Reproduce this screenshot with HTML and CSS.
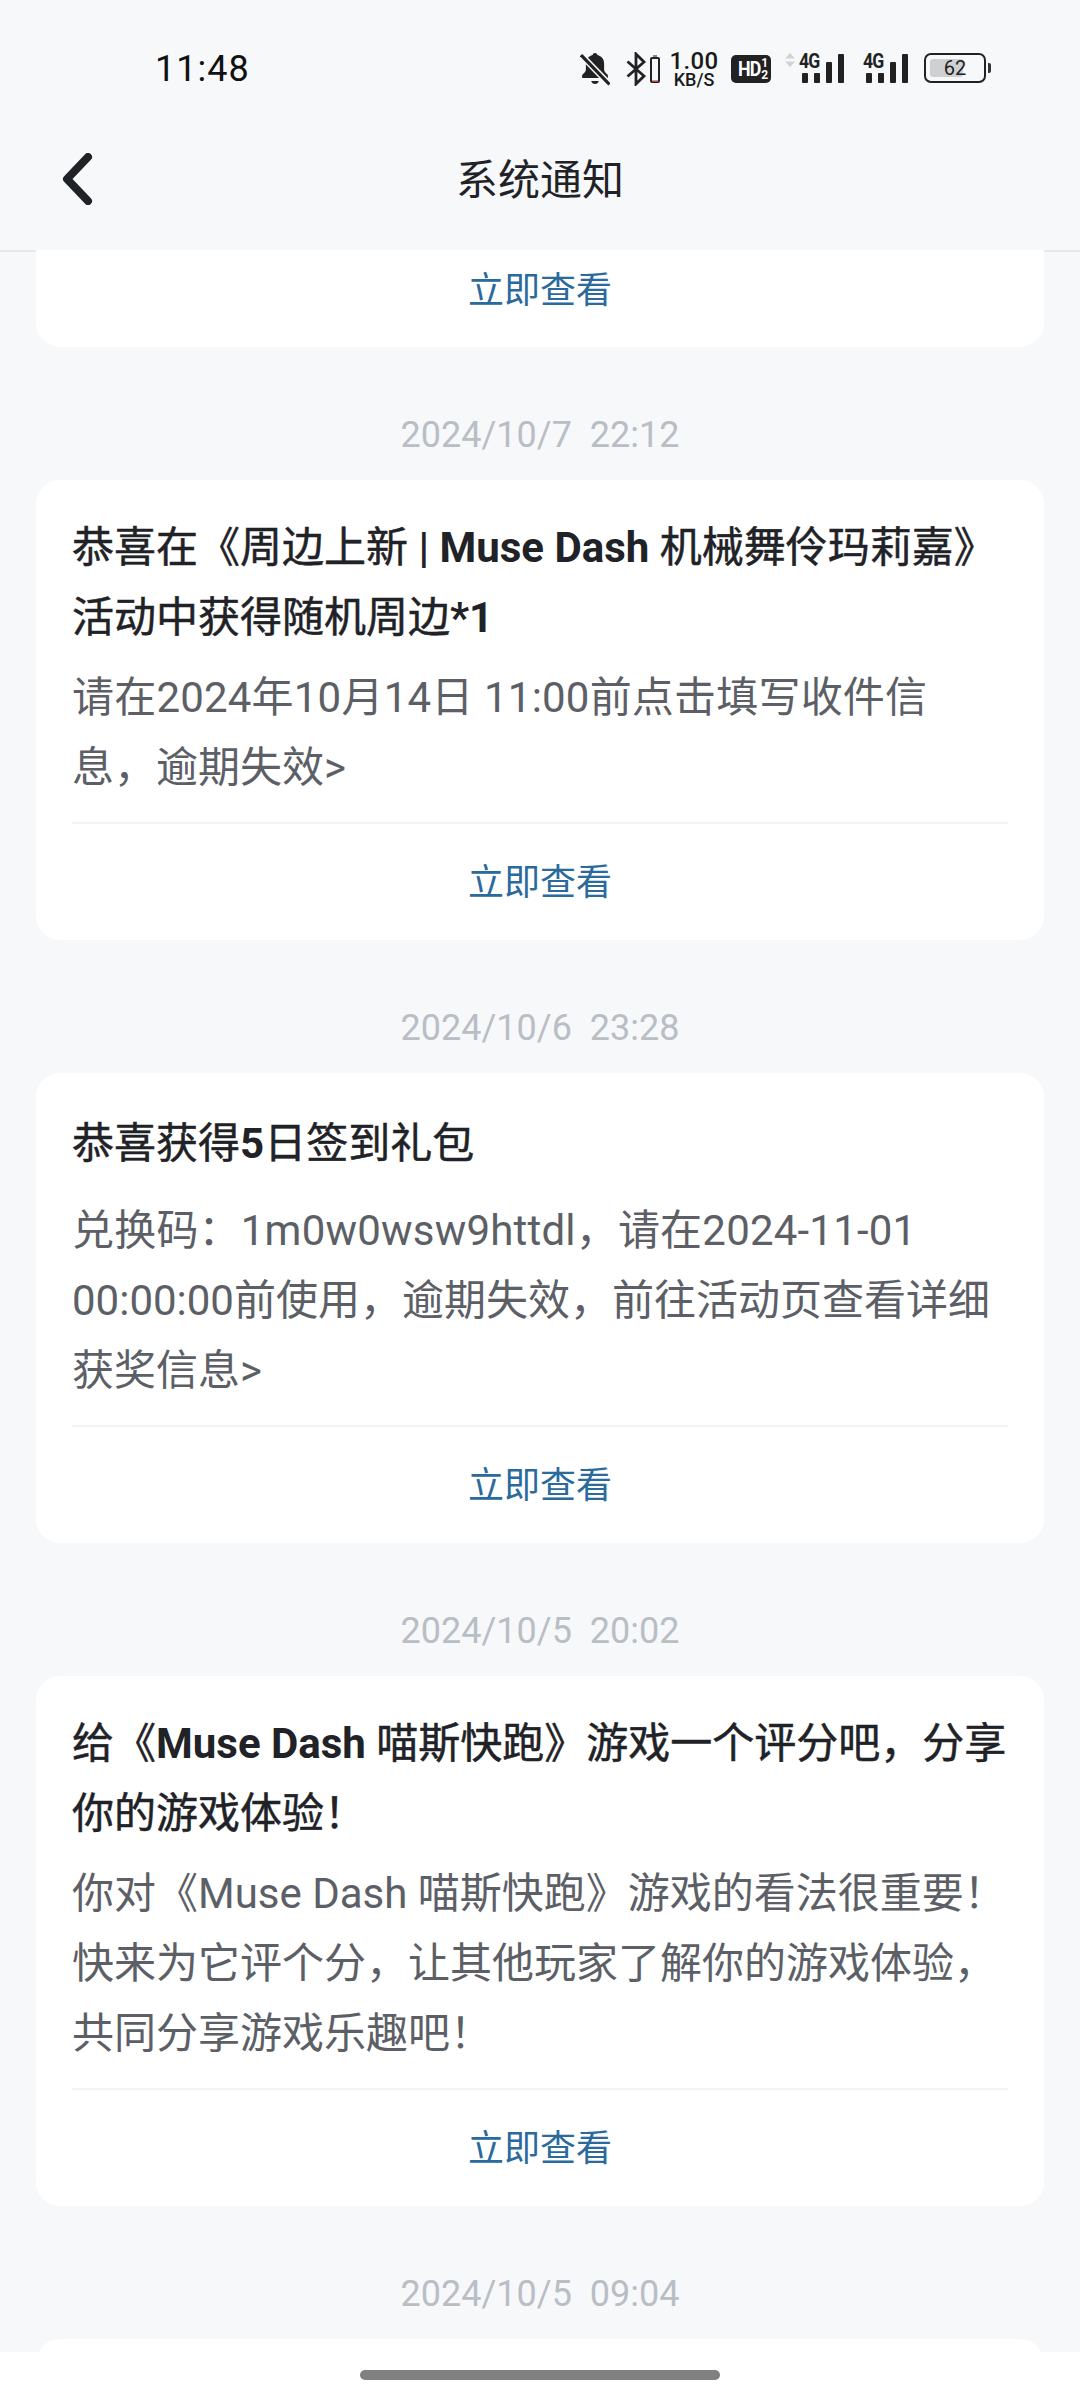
FILE: index.html
```html
<!DOCTYPE html>
<html lang="zh-CN">
<head>
<meta charset="utf-8">
<title>系统通知</title>
<link rel="stylesheet" href="styles.css">
</head>
<body>
<div class="screen">
  <header class="top">
    <div class="status">
      <span class="clock">11:48</span>
      <div class="status-icons">
        <svg class="ic-bell" width="30" height="34" viewBox="0 0 28 34" preserveAspectRatio="none"><path d="M14 1c1.300 0 2 .8 2.200 2 4 1 6.300 4.200 6.300 8.500v6c0 2 1.500 3.500 3.500 5.500v3H2v-3c2-2 3.500-3.500 3.500-5.500v-6C5.500 7.200 8 4 11.800 3 12 1.800 12.700 1 14 1z" fill="#222"/><path d="M10.500 29h7c-.4 2-1.800 3-3.500 3s-3.100-1-3.500-3z" fill="#222"/><path d="M1.500 3.500 28 33" stroke="#f7f8fa" stroke-width="6"/><path d="M1 3l26.500 29.500" stroke="#222" stroke-width="3"/></svg>
        <svg class="ic-bt" width="34" height="34" viewBox="0 0 34 34"><path d="M1.500 9.500 18 24l-8 8V2l8 8L1.500 24.500" fill="none" stroke="#222" stroke-width="2.800"/><rect x="25" y="6" width="8" height="24" rx="1" fill="none" stroke="#222" stroke-width="2"/><rect x="27" y="3" width="4" height="2" fill="#888"/><rect x="26" y="28" width="6" height="1.500" fill="#e88"/></svg>
        <div class="speed"><span class="speed-num">1.00</span><span class="speed-unit">KB/S</span></div>
        <div class="hd"><span class="hd-main">HD</span><span class="hd-sub"><span>1</span><span>2</span></span></div>
        <div class="net net-first">
          <svg class="arrows" width="10" height="14" viewBox="0 0 10 14"><path d="M5 0l5 5.500H0zM5 14 0 8.500h10z" fill="#d2d3d5"/></svg>
          <span class="g4">4G</span>
          <div class="bars"><i class="b1"></i><i class="b2"></i><i class="b3"></i><i class="b4"></i></div>
        </div>
        <div class="net">
          <span class="g4">4G</span>
          <div class="bars"><i class="b1"></i><i class="b2"></i><i class="b3"></i><i class="b4"></i></div>
        </div>
        <div class="battery"><div class="batt-body"><div class="batt-fill"></div><span class="batt-num">62</span></div><div class="batt-cap"></div></div>
      </div>
    </div>
    <div class="nav">
      <svg class="back" width="34" height="52" viewBox="0 0 34 52"><path d="M28 4 7 26l21 22" fill="none" stroke="#1f2226" stroke-width="8" stroke-linecap="round" stroke-linejoin="round"/></svg>
      <h1 class="nav-title">系统通知</h1>
    </div>
  </header>

  <main class="list">
    <article class="card card-cut">
      <a class="more">立即查看</a>
    </article>

    <time class="stamp">2024/10/7&nbsp; 22:12</time>
    <article class="card">
      <div class="content">
        <h2 class="title"><span class="ln">恭喜在《周边上新 <b>| Muse Dash</b> 机械舞伶玛莉嘉》</span><span class="ln">活动中获得随机周边<b>*1</b></span></h2>
        <p class="desc"><span class="ln wide">请在2024年10月14日 11:00前点击填写收件信</span><span class="ln">息，逾期失效&gt;</span></p>
      </div>
      <a class="more">立即查看</a>
    </article>

    <time class="stamp">2024/10/6&nbsp; 23:28</time>
    <article class="card">
      <div class="content">
        <h2 class="title title-single">恭喜获得<b>5</b>日签到礼包</h2>
        <p class="desc"><span class="ln wide">兑换码：1m0w0wsw9httdl，请在2024-11-01</span><span class="ln">00:00:00前使用，逾期失效，前往活动页查看详细</span><span class="ln">获奖信息&gt;</span></p>
      </div>
      <a class="more">立即查看</a>
    </article>

    <time class="stamp">2024/10/5&nbsp; 20:02</time>
    <article class="card">
      <div class="content">
        <h2 class="title"><span class="ln">给《<b>Muse Dash</b> 喵斯快跑》游戏一个评分吧，分享</span><span class="ln">你的游戏体验！</span></h2>
        <p class="desc">你对《Muse Dash 喵斯快跑》游戏的看法很重要！快来为它评个分，让其他玩家了解你的游戏体验，共同分享游戏乐趣吧！</p>
      </div>
      <a class="more">立即查看</a>
    </article>

    <time class="stamp">2024/10/5&nbsp; 09:04</time>
    <article class="card card-next"></article>
  </main>

  <footer class="gesture"><div class="gesture-bar"></div></footer>
</div>
</body>
</html>
```
FILE: styles.css
```css
* { box-sizing: border-box; }
html, body { margin: 0; padding: 0; }
body {
  width: 1080px;
  height: 2400px;
  overflow: hidden;
  background: #f7f8fa;
  font-family: Roboto, "Noto Sans CJK SC", sans-serif;
}
.screen { width: 1080px; height: 2400px; display: flex; flex-direction: column; overflow: hidden; }

.top { height: 252px; flex: none; background: #f7f8fa; border-bottom: 2px solid #e8e9ec; }
.status { height: 90px; padding: 45px 89px 0 155px; display: flex; justify-content: space-between; align-items: flex-start; }
.clock { font-size: 36px; line-height: 48px; color: #111; letter-spacing: 1px; }
.status-icons { display: flex; align-items: center; height: 48px; color: #222; }
.ic-bell { margin-right: 16px; }
.ic-bt { margin-right: 11px; }
.speed { display: flex; flex-direction: column; align-items: center; width: 46px; margin-right: 14px; color: #1a1a1a; }
.speed-num { font-size: 24px; line-height: 22px; font-weight: 500; letter-spacing: .4px; }
.speed-unit { font-size: 18px; line-height: 16px; font-weight: 500; }
.hd { width: 40px; height: 28px; background: #222; border-radius: 5px; color: #fff; display: flex; align-items: center; justify-content: center; margin-right: 28px; gap: 1px; }
.hd-main { font-size: 21px; font-weight: 700; line-height: 1; letter-spacing: -1px; transform: scaleX(.85); transform-origin: right center; }
.hd-sub { display: flex; flex-direction: column; font-size: 12px; font-weight: 700; line-height: 12px; }
.net { position: relative; display: flex; align-items: flex-end; width: 45px; height: 32px; padding: 0 0 2px 3px; margin-right: 16px; }
.net-first { margin-right: 19px; }
.arrows { position: absolute; left: -14px; top: 0; }
.g4 { position: absolute; left: 0; top: -1px; font-size: 20px; line-height: 18px; font-weight: 700; color: #222; letter-spacing: -1px; transform: scaleX(.88); transform-origin: left top; }
.bars { display: flex; align-items: flex-end; gap: 6px; height: 30px; }
.bars i { display: block; width: 6px; background: #222; border-radius: 1px; }
.bars .b1 { height: 10px; }
.bars .b2 { height: 10px; }
.bars .b3 { height: 21px; }
.bars .b4 { height: 29px; }
.battery { display: flex; align-items: center; margin-bottom: 2px; }
.batt-body { position: relative; width: 62px; height: 30px; border: 2px solid #222; border-radius: 7px; padding: 3px; text-align: center; }
.batt-fill { position: absolute; left: 4px; top: 4px; bottom: 4px; width: 33px; background: #cfd0d2; border-radius: 3px; }
.batt-num { position: relative; display: block; font-size: 20px; line-height: 20px; color: #222; }
.batt-cap { width: 3px; height: 10px; background: #333; margin-left: 2px; border-radius: 0 2px 2px 0; }

.nav { position: relative; height: 160px; display: flex; align-items: center; justify-content: center; padding-top: 21px; }
.back { position: absolute; left: 60px; top: 63px; }
.nav-title { margin: 0; font-size: 42px; font-weight: 400; line-height: 56px; color: #1f2226; }

.list { flex: 1; min-height: 0; overflow: hidden; margin-top: -2px; padding: 0 36px; position: relative; }
.card { background: #fff; border-radius: 24px; padding: 0 36px; }
.card-cut { height: 97px; border-radius: 0 0 24px 24px; }
.card-cut .more { height: 97px; padding-bottom: 24px; }
.content { padding: 33px 0 19px; border-bottom: 2px solid #f3f4f6; }
.title { margin: 0; font-size: 42px; line-height: 70px; font-weight: 400; -webkit-text-stroke: .5px #1f2226; color: #1f2226; }
.title b { font-weight: 700; -webkit-text-stroke: 0; }
.ln { display: block; }
.wide { letter-spacing: .2px; }
.title-single { padding: 3px 0 7px; }
.desc { margin: 10px 0 0; font-size: 42px; line-height: 70px; font-weight: 400; color: #5c6066; }
.more { display: flex; align-items: center; justify-content: center; height: 116px; padding-bottom: 6px; font-size: 36px; color: #2a6a9c; }
.stamp { display: block; height: 133px; padding-top: 68px; text-align: center; font-size: 36px; line-height: 40px; color: #b9bec5; }
.card-next { height: 100px; }

.gesture { flex: none; height: 48px; background: #fff; position: relative; z-index: 2; display: flex; justify-content: center; padding-top: 18px; }
.gesture-bar { width: 360px; height: 10px; border-radius: 5px; background: #808080; }
```
